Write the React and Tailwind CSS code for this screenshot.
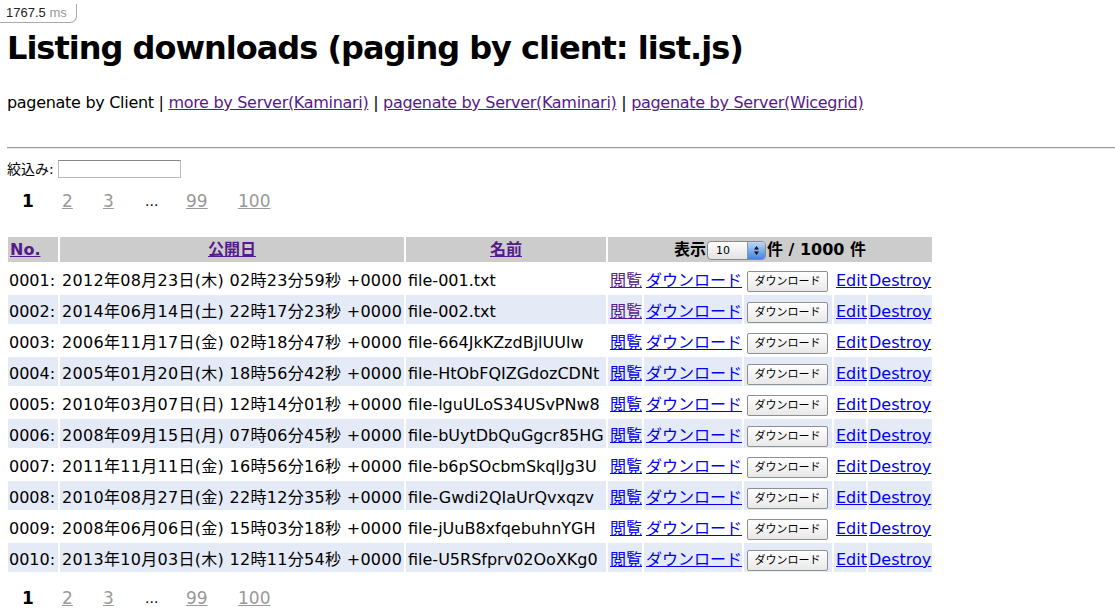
import React from "react";

const rows = [
  ["0001", "2012年08月23日(木) 02時23分59秒 +0000", "file-001.txt", true],
  ["0002", "2014年06月14日(土) 22時17分23秒 +0000", "file-002.txt", true],
  ["0003", "2006年11月17日(金) 02時18分47秒 +0000", "file-664JkKZzdBjlUUlw", false],
  ["0004", "2005年01月20日(木) 18時56分42秒 +0000", "file-HtObFQIZGdozCDNt", false],
  ["0005", "2010年03月07日(日) 12時14分01秒 +0000", "file-lguULoS34USvPNw8", false],
  ["0006", "2008年09月15日(月) 07時06分45秒 +0000", "file-bUytDbQuGgcr85HG", false],
  ["0007", "2011年11月11日(金) 16時56分16秒 +0000", "file-b6pSOcbmSkqlJg3U", false],
  ["0008", "2010年08月27日(金) 22時12分35秒 +0000", "file-Gwdi2QIaUrQvxqzv", false],
  ["0009", "2008年06月06日(金) 15時03分18秒 +0000", "file-jUuB8xfqebuhnYGH", false],
  ["0010", "2013年10月03日(木) 12時11分54秒 +0000", "file-U5RSfprv02OoXKg0", false],
];

function Pager() {
  return (
    <div className="flex items-center pl-[15px] text-[17px] leading-[20px]">
      <span className="w-[40px] font-bold text-black">1</span>
      <span className="w-[41px]"><a className="text-[#999] underline">2</a></span>
      <span className="w-[42px]"><a className="text-[#999] underline">3</a></span>
      <span className="w-[41px] text-black text-[14px]">...</span>
      <span className="w-[52px]"><a className="text-[#999] underline">99</a></span>
      <span><a className="text-[#999] underline">100</a></span>
    </div>
  );
}

function PerPage() {
  return (
    <span className="inline-flex h-[19px] w-[59px] mx-[1px] align-middle items-stretch rounded-[4px] border border-[#8a8a8a] overflow-hidden bg-linear-to-b from-white to-[#e2e2e2] font-normal">
      <span className="flex-1 pl-[8px] text-[11px] leading-[17px] text-black text-left">10</span>
      <span className="w-[18px] bg-linear-to-b from-[#bcd6f6] to-[#3f86e0] border-l border-[#7a96c0] flex items-center justify-center">
        <svg width="7" height="11" viewBox="0 0 7 11">
          <path d="M3.5 1 L6 4.5 L1 4.5 Z" fill="#111" />
          <path d="M3.5 10 L6 6.5 L1 6.5 Z" fill="#111" />
        </svg>
      </span>
    </span>
  );
}

export default function App() {
  return (
    <div className="bg-white min-h-[613px] text-black text-[16px]" style={{ fontFamily: '"DejaVu Sans", "Noto Sans CJK JP", sans-serif' }}>
      <div className="inline-block h-[19px] w-[77px] border-r border-b border-[#aaa] rounded-br-[7px] pl-[6px] text-[13px] leading-[18px]" style={{ fontFamily: '"Liberation Sans", sans-serif' }}>
        <span className="text-[#222]">1767.5</span> <span className="text-[#999]">ms</span>
      </div>

      <div className="px-[7px]">
        <h1 className="mt-[6px] text-[32px] leading-[37px] font-bold tracking-[-1px]">Listing downloads (paging by client: list.js)</h1>

        <p className="mt-[26px] leading-[19px] tracking-[-0.3px]">
          pagenate by Client | <a className="text-[#551a8b] underline">more by Server(Kaminari)</a> | <a className="text-[#551a8b] underline">pagenate by Server(Kaminari)</a> | <a className="text-[#551a8b] underline">pagenate by Server(Wicegrid)</a>
        </p>

        <div className="mt-[35px] mr-[-7px] border-t border-[#9a9a9a] border-b border-b-[#e8e8e8] h-[2px]" />

        <div className="mt-[11px] flex items-center text-[14px] leading-[18px]">
          <span>絞込み:</span>
          <input className="ml-[4px] h-[18px] w-[123px] border border-[#bbb] border-t-[#888] bg-white outline-none" />
        </div>

        <div className="mt-[13px]">
          <Pager />
        </div>

        <table className="mt-[24px] ml-[-1px] table-fixed border-separate border-spacing-[2px] text-[16px]" style={{ width: 928 }}>
          <colgroup>
            <col className="w-[50px]" />
            <col className="w-[344px]" />
            <col className="w-[200px]" />
            <col className="w-[34px]" />
            <col className="w-[98px]" />
            <col className="w-[88px]" />
            <col className="w-[32px]" />
            <col className="w-[64px]" />
          </colgroup>
          <thead>
            <tr className="h-[25px] bg-[#cccccc] font-bold">
              <th className="p-0 pl-[2px] text-left bg-[#cccccc]"><a className="text-[#551a8b] underline">No.</a></th>
              <th className="p-0 text-center bg-[#cccccc]"><a className="text-[#551a8b] underline">公開日</a></th>
              <th className="p-0 text-center bg-[#cccccc]"><a className="text-[#551a8b] underline">名前</a></th>
              <th colSpan={5} className="p-0 text-center bg-[#cccccc] whitespace-nowrap">
                表示<PerPage />件 / 1000 件
              </th>
            </tr>
          </thead>
          <tbody>
            {rows.map((r, i) => {
              const bg = i % 2 === 1 ? "bg-[#e4eaf6]" : "bg-white";
              return (
                <tr key={r[0]} className="h-[29px]">
                  <td className={`p-0 pt-[5px] pl-[1px] whitespace-nowrap overflow-hidden ${bg}`}>{r[0]}:</td>
                  <td className={`p-0 pt-[5px] pl-[2px] whitespace-nowrap overflow-hidden tracking-[0.3px] ${bg}`}>{r[1]}</td>
                  <td className={`p-0 pt-[5px] pl-[2px] whitespace-nowrap overflow-hidden ${bg}`}>{r[2]}</td>
                  <td className={`p-0 pt-[5px] pl-[2px] whitespace-nowrap ${bg}`}>
                    <a className={`underline ${r[3] ? "text-[#551a8b]" : "text-[#0000ee]"}`}>閲覧</a>
                  </td>
                  <td className={`p-0 pt-[5px] pl-[2px] whitespace-nowrap ${bg}`}>
                    <a className="underline text-[#0000ee]">ダウンロード</a>
                  </td>
                  <td className={`p-0 pt-[5px] pl-[3px] whitespace-nowrap ${bg}`}>
                    <button className="h-[21px] w-[81px] align-middle border border-[#8f8f8f] rounded-[2px] bg-linear-to-b from-white to-[#e8e8e8] text-[11px] leading-[19px] text-black">ダウンロード</button>
                  </td>
                  <td className={`p-0 pt-[5px] pl-[2px] whitespace-nowrap ${bg}`}>
                    <a className="underline text-[#0000ee]">Edit</a>
                  </td>
                  <td className={`p-0 pt-[5px] pl-[1px] whitespace-nowrap overflow-hidden ${bg}`}>
                    <a className="underline text-[#0000ee]">Destroy</a>
                  </td>
                </tr>
              );
            })}
          </tbody>
        </table>

        <div className="mt-[14px]">
          <Pager />
        </div>
      </div>
    </div>
  );
}
